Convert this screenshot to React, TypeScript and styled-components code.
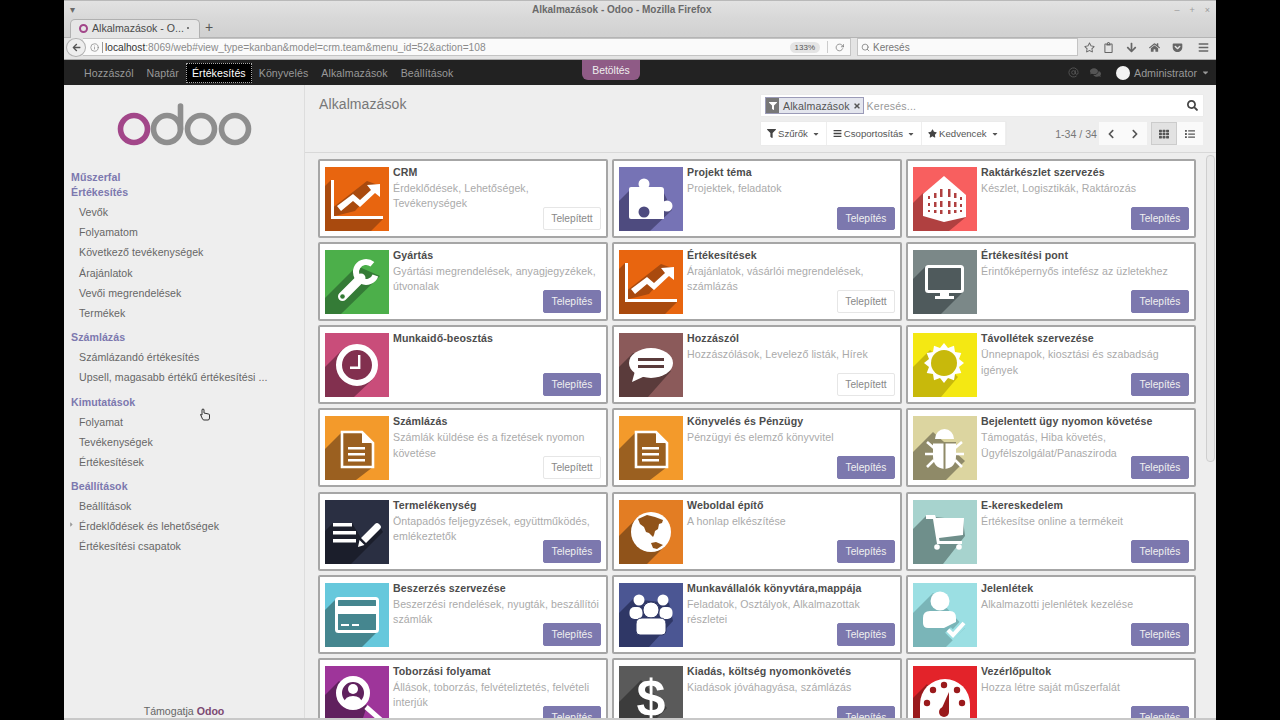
import React from "react";
import styled, { createGlobalStyle } from "styled-components";
import {
  FaFilter, FaBars, FaStar, FaRegStar, FaSearch, FaTimes, FaChevronLeft, FaChevronRight, FaTh, FaList,
  FaComments, FaCaretDown, FaArrowLeft, FaArrowDown, FaHome, FaGetPocket, FaRegClipboard, FaCaretRight,
} from "react-icons/fa";
import { FiInfo, FiSearch, FiRotateCw, FiAtSign } from "react-icons/fi";

const Global = createGlobalStyle`
  html, body { margin: 0; padding: 0; background: #000; overflow: hidden; }
  * { box-sizing: border-box; }
  #root { font-family: "Liberation Sans", Arial, sans-serif; }
`;

const Win = styled.div`
  width: 1152px; height: 720px; margin: 0 auto; background: #eee; display: flex; flex-direction: column;
  overflow: hidden; position: relative; border-bottom: 2px solid #c8c8c8;
`;
const TitleBar = styled.div`
  height: 18px; background: linear-gradient(#e2e2e2, #d8d8d8); border-top: 1px solid #b9b9b9; display: flex;
  align-items: center; justify-content: space-between; padding: 0 6px 0 6px; color: #6a6a6a; font-size: 10px;
`;
const TitleText = styled.div`font-weight: 700; font-size: 10px; margin-right: 6px;`;
const WinBtns = styled.div`display: flex; gap: 10px; font-size: 9px; color: #9a9a9a;`;
const TabBar = styled.div`
  height: 20px; background: linear-gradient(#d8d8d8, #d0d0d0); border-bottom: 1px solid #b4b4b4; display: flex;
  align-items: flex-end; padding-left: 6px; color: #555;
`;
const Tab = styled.div`
  width: 130px; height: 19px; background: #e6e6e6; border: 1px solid #b0b0b0; border-bottom: 0; border-radius: 5px 5px 0 0;
  display: flex; align-items: center; padding: 0 10px 2px 8px; gap: 3px; font-size: 10.6px; color: #4a4a4a; margin-bottom: -1px;
`;
const Favicon = styled.span`
  width: 9px; height: 9px; border: 2px solid #a24689; border-radius: 50%; flex: none;
`;
const TabLabel = styled.span`flex: 1; white-space: nowrap; margin-left: 1px;`;
const NewTab = styled.span`font-size: 14px; margin: 0 0 2px 5px; color: #555;`;
const NavBar = styled.div`
  height: 22px; background: #e4e4e4; display: flex; align-items: center; padding: 0 7px 3px 2px; border-bottom: 1px solid #aaa;
`;
const BackBtn = styled.div`
  width: 20px; height: 19px; border-radius: 50%; border: 1px solid #b0b0b0; background: #eee; display: flex;
  align-items: center; justify-content: center; color: #555; font-size: 9px; flex: none; position: relative; z-index: 1;
`;
const UrlBox = styled.div`
  width: 768px; height: 18px; margin-left: -3px; background: #fafafa; border: 1px solid #c4c4c4; border-left: 0;
  display: flex; align-items: center; padding: 0 6px 0 7px; font-size: 10.2px; color: #8a8a8a; gap: 3px;
`;
const UrlText = styled.span`flex: 1; border-left: 1px solid #999; padding-left: 2px; white-space: nowrap;`;
const UrlHost = styled.b`color: #333; font-weight: 400;`;
const ZoomPill = styled.span`
  background: #e4e4e4; border-radius: 8px; padding: 1px 5px; font-size: 8px; color: #555; margin-right: 4px;
`;
const Reload = styled.span`
  border-left: 1px solid #ccc; padding-left: 7px; display: flex; color: #777; font-size: 9px; height: 12px; align-items: center;
`;
const SearchBox = styled.div`
  width: 221px; height: 18px; margin-left: 6px; background: #fafafa; border: 1px solid #c4c4c4; display: flex; align-items: center;
  padding-left: 3px; gap: 3px; font-size: 10px; color: #777;
`;
const ToolIcons = styled.div`
  display: flex; flex: 1; justify-content: flex-end; align-items: center; gap: 12px; color: #666; font-size: 11px;
  & > :first-child { margin-right: -4px; }
  & > :last-child { margin-left: 3px; }
`;
const TopNav = styled.div`
  height: 25px; background: #222; display: flex; align-items: center; padding: 0 6px 0 14px; position: relative;
`;
const NavItem = styled.div<{ $active?: boolean }>`
  height: 20px; padding: 0 5px; margin-right: 1px; display: flex; align-items: center; font-size: 10.6px; letter-spacing: 0.08px;
  color: ${(p) => (p.$active ? "#fff" : "#999")}; background: ${(p) => (p.$active ? "#000" : "transparent")};
  border: 1px ${(p) => (p.$active ? "dotted #aaa" : "solid transparent")}; white-space: nowrap;
`;
const Loading = styled.div`
  position: absolute; left: 518px; top: 0; width: 58px; height: 20px; background: #8f5b86; color: #eee; font-size: 10.4px;
  display: flex; align-items: center; justify-content: center; border-radius: 0 0 6px 6px;
`;
const NavRight = styled.div`margin-left: auto; display: flex; align-items: center; color: #555; font-size: 11px;`;
const Avatar = styled.span`width: 14px; height: 14px; background: #f2f2f2; border-radius: 50%; margin: 0 4px 0 15px; flex: none;`;
const AdminText = styled.span`font-size: 10.7px; color: #999;`;
const Body = styled.div`flex: 1; display: flex; min-height: 0;`;
const Side = styled.aside`
  width: 241px; flex: none; background: #eee; border-right: 1px solid #ddd; display: flex; flex-direction: column; position: relative;
`;
const Logo = styled.svg`width: 140px; height: 50px; margin: 18px 0 0 50px; flex: none;`;
const Menu = styled.nav`margin-top: 17px; flex: 1; padding-left: 7px;`;
const MenuHead = styled.div`
  font-size: 10.6px; font-weight: 700; color: #7c78ae; height: 15px; line-height: 15px; letter-spacing: 0.06px;
`;
const Group = styled.div`margin-bottom: 7px;`;
const MenuItem = styled.div`
  font-size: 10.6px; color: #666; height: 20.2px; line-height: 20px; padding-left: 8px; white-space: nowrap; position: relative; letter-spacing: 0.06px;
`;
const First = styled.div`height: 2px;`;
const Caret = styled.span`position: absolute; left: -3px; top: 0; font-size: 7px; color: #999;`;
const Footer = styled.div`text-align: center; font-size: 10.6px; color: #666; padding-top: 3px; height: 16px;`;
const FooterBrand = styled.b`color: #7c4a72;`;
const Cursor = styled.svg`position: absolute; left: 135px; top: 323px; width: 12px; height: 13px;`;
const Main = styled.main`flex: 1; min-width: 0; display: flex; flex-direction: column;`;
const Panel = styled.div`
  height: 68px; flex: none; display: flex; justify-content: space-between; padding: 10px 13px 0 14px; border-bottom: 1px solid #d8d8d8;
`;
const PageTitle = styled.h1`margin: 0; font-size: 14px; font-weight: 400; color: #777; line-height: 18px; letter-spacing: 0.1px;`;
const PanelRight = styled.div`width: 442px; display: flex; flex-direction: column; gap: 6px;`;
const Search = styled.div`
  height: 21px; background: #fff; display: flex; align-items: center; padding: 0 5px 0 4px; box-shadow: 0 0 1px #ddd;
`;
const Facet = styled.div`
  height: 17px; display: flex; align-items: center; background: #e4e6ee; border: 1px solid #9b9bb8; font-size: 10.6px; color: #555; letter-spacing: 0.1px;
`;
const FacetIcon = styled.span`
  width: 13px; height: 15px; background: #777; color: #fff; display: flex; align-items: center; justify-content: center; font-size: 8px; margin-right: 4px;
`;
const FacetX = styled.span`font-size: 8px; margin: 0 2px 0 3px; display: flex; color: #555;`;
const SearchPh = styled.span`flex: 1; font-size: 10.6px; color: #999; margin-left: 3px; letter-spacing: 0.2px;`;
const SearchBtn = styled.span`display: flex; font-size: 11px; color: #444;`;
const ToolRow = styled.div`display: flex; align-items: center;`;
const BtnGroup = styled.div`display: flex; height: 23px; background: #fff; box-shadow: 0 0 1px #ddd;`;
const ToolBtn = styled.div`
  display: flex; align-items: center; gap: 2px; padding: 0 6px; font-size: 9.6px; color: #555; border-right: 1px solid #eee; white-space: nowrap;
  & > svg { margin-left: 2px; }
`;
const SmallIcon = styled.span`display: inline-flex; font-size: 9px; color: #444;`;
const Pager = styled.span`margin-left: auto; font-size: 10.6px; color: #777; margin-right: 2px;`;
const IconBtn = styled.div<{ $on?: boolean }>`
  width: 24px; height: 23px; display: flex; align-items: center; justify-content: center; font-size: 10px; color: #555;
  background: ${(p) => (p.$on ? "#e2e2e2" : "#fafafa")}; border: ${(p) => (p.$on ? "1px solid #ccc" : "0")};
`;
const Views = styled.div`display: flex; margin-left: 4px; & > div { width: 26px; }`;
const Content = styled.div`flex: 1; min-height: 0; display: flex; overflow: hidden;`;
const Grid = styled.div`
  flex: 1; padding: 6px 0 0 13px; display: grid; grid-template-columns: repeat(3, 290px); grid-auto-rows: 79px; column-gap: 4px; row-gap: 4.17px;
`;
const Scroll = styled.div`
  width: 9px; margin: 2px 1px 0 0; height: 307px; background: #e9e9e9; border: 1px solid #cfcfcf; border-radius: 4px;
`;
const Card = styled.article`
  background: #fff; border: 2px solid #a6a6a6; border-radius: 2px; padding: 6px 5px 5px 5px; display: flex; gap: 4px;
`;
const IconBox = styled.svg`width: 64px; height: 64px; flex: none; display: block;`;
const Info = styled.div`flex: 1; min-width: 0; display: flex; flex-direction: column;`;
const TextBlock = styled.div`flex: 1; min-height: 0; margin-top: -2px;`;
const CardTitle = styled.h2`
  margin: 0; font-size: 10.6px; font-weight: 700; color: #4c4c4c; line-height: 14px; letter-spacing: 0.1px; white-space: nowrap;
`;
const Desc = styled.p`
  margin: 2px 0 0; font-size: 10.6px; color: #aaa; line-height: 15.3px; letter-spacing: 0.08px;
`;
const Install = styled.div<{ $done?: boolean }>`
  align-self: flex-end; width: 58px; height: 23px; flex: none; border-radius: 2px; display: flex; align-items: center; justify-content: center;
  font-size: 10.2px; margin: -6px 0 1px;
  color: ${(p) => (p.$done ? "#888" : "#f0f0f0")}; background: ${(p) => (p.$done ? "#fff" : "#7c78ae")};
  border: 1px solid ${(p) => (p.$done ? "#e6e6e6" : "#7c78ae")};
`;

type G = { bg: string; sh: string; poly: string; glyph: (sh: string, bg: string) => React.ReactNode };

const star = (cx: number, cy: number, R: number, r: number, n: number) =>
  Array.from({ length: n * 2 }, (_, i) => {
    const a = (Math.PI * i) / n - Math.PI / 2;
    const q = i % 2 ? r : R;
    return `${(cx + q * Math.cos(a)).toFixed(1)},${(cy + q * Math.sin(a)).toFixed(1)}`;
  }).join(" ");

const chart: G["glyph"] = () => (
  <g fill="#fff">
    <path d="M6 13h3v36h49v3H6z" />
    <path d="M12 39l16-12 7 6 11-10-4-5 13-1v13l-5-4-15 14-7-6-12 10z" />
  </g>
);
const chartPoly = "0,19 6,13 6,42 42,14 53,18 30,44 10,49 58,49 58,52 46,64 0,64";
const doc: G["glyph"] = () => (
  <g>
    <path d="M17 16h20l11 11v24H17z" fill="none" stroke="#fff" strokeWidth="2.6" />
    <path d="M37 16v11h11z" fill="#fff" />
    <path d="M23 31h17v2.4H23zM23 37h17v2.4H23zM23 43h17v2.4H23z" fill="#fff" />
  </g>
);
const docPoly = "17,16 0,33 0,64 31,64 48,51 48,27 37,16";

const icons: Record<string, G> = {
  crm: { bg: "#e8650f", sh: "#a94a0e", poly: chartPoly, glyph: chart },
  sales: { bg: "#e8650f", sh: "#a94a0e", poly: chartPoly, glyph: chart },
  project: {
    bg: "#7673b5", sh: "#4e4b7f", poly: "14,20 0,34 0,64 31,64 53,43 44,24",
    glyph: (sh) => (
      <g fill="#fff">
        <path d="M12 20h30q3 0 3 3v29H12q-2 0-2-2V22q0-2 2-2z" />
        <circle cx="25" cy="17" r="5.5" />
        <circle cx="48" cy="39" r="5.5" />
        <circle cx="25" cy="45" r="5.5" fill={sh} />
      </g>
    ),
  },
  inventory: {
    bg: "#f85f5f", sh: "#b04040", poly: "10,26 0,36 0,64 36,64 53,50 53,30",
    glyph: () => (
      <g>
        <path d="M31 9l22 19v22l-22 5-21-6V27z" fill="#fff" />
        <g fill="#b04040">
          <path d="M15 29h2v3h-2zM21 26h2.5v5H21zM27 22h2.5v8H27zM35 22h2.5v8H35zM41 26h2.5v5H41zM47 30h2v3h-2zM15 36h2v3h-2zM21 35h2.5v5H21zM27 34h2.5v6H27zM35 34h2.5v6H35zM41 35h2.5v5H41zM47 37h2v3h-2zM15 43h2v2h-2zM21 43h2.5v3H21zM27 43h2.5v4H27zM35 43h2.5v4H35zM41 43h2.5v3H41zM47 43h2v2h-2z" />
        </g>
      </g>
    ),
  },
  mfg: {
    bg: "#4caf4a", sh: "#347b36", poly: "32,16 0,48 0,64 16,64 55,26",
    glyph: (sh) => (
      <g>
        <path d="M17.5 46.5L36 28" stroke="#fff" strokeWidth="9" strokeLinecap="round" />
        <path d="M47.4 14.3A10 10 0 1 0 50.4 25.4" fill="none" stroke="#fff" strokeWidth="6" />
        <circle cx="17.5" cy="46.5" r="2.3" fill={sh} />
      </g>
    ),
  },
  pos: {
    bg: "#7b8888", sh: "#4f5a5c", poly: "12,17 0,29 0,64 28,64 50,42",
    glyph: (sh) => (
      <g>
        <rect x="13.5" y="16.5" width="36" height="25" rx="2" fill={sh} stroke="#fff" strokeWidth="3" />
        <path d="M27 42h9v4h5v3H22v-3h5z" fill="#fff" />
      </g>
    ),
  },
  clock: {
    bg: "#c94d7a", sh: "#82304f", poly: "17,17 0,34 0,64 29,64 47,47",
    glyph: () => (
      <g>
        <circle cx="32" cy="32" r="18" fill="#82304f" stroke="#fff" strokeWidth="6" />
        <path d="M33 22h2.4v14H25v-2.6h8z" fill="#fff" />
      </g>
    ),
  },
  discuss: {
    bg: "#8b5a5a", sh: "#5a3b3b", poly: "14,20 0,34 0,64 29,64 52,38",
    glyph: (sh) => (
      <g>
        <ellipse cx="32" cy="30" rx="22" ry="15" fill="#fff" />
        <path d="M16 38l-3 11 13-6z" fill="#fff" />
        <path d="M19 25h26v3H19zM19 32h26v3H19z" fill={sh} />
      </g>
    ),
  },
  sun: {
    bg: "#f4e813", sh: "#c8b90b", poly: "17,17 0,34 0,64 28,64 45,44",
    glyph: (sh) => (
      <g>
        <polygon points={star(31, 30, 20, 15.5, 12)} fill="#fff" />
        <circle cx="31" cy="30" r="13" fill={sh} />
      </g>
    ),
  },
  doc: { bg: "#f39a2b", sh: "#9b6020", poly: docPoly, glyph: doc },
  bug: {
    bg: "#dcd5a0", sh: "#8f8a68", poly: "20,16 0,36 0,64 33,64 52,45",
    glyph: (sh) => (
      <g>
        <path d="M22 23a9.5 10 0 0 1 19 0z" fill="#fff" />
        <path d="M20 26h23v14q0 12-11.500 13Q20 52 20 40z" fill="#fff" />
        <path d="M30.500 26h2v27h-2zM20 26h23v1.500H20z" fill={sh} />
        <path d="M21 32l-7-6M20 38h-8M21 44l-7 7M42 32l7-6M43 38h8M42 44l7 7" stroke="#fff" strokeWidth="2.6" fill="none" />
      </g>
    ),
  },
  notes: {
    bg: "#2a2f42", sh: "#1b1e2b", poly: "8,23 0,31 0,64 26,64 58,32 52,22 36,38 27,23",
    glyph: () => (
      <g fill="#fff">
        <path d="M8 23h19v3.400H8zM8 31h23v3.400H8zM8 39h23v3.400H8z" />
        <path d="M36 38l14-14q2-2 4 0l1 1q2 2 0 4L41 43zM34.500 40l5 5-6.500 2z" />
      </g>
    ),
  },
  globe: {
    bg: "#e37d23", sh: "#90531a", poly: "18,18 0,36 0,64 28,64 46,46",
    glyph: (sh) => (
      <g>
        <circle cx="32" cy="32" r="20" fill="#fff" />
        <path d="M19 19l9-4 8 2 8 3-1 3-3 1-1 5-3 2-1 4-1 2-4-4-3-1-2-5-4-3z" fill={sh} />
        <path d="M32 43l5-1 7 3-6 4-4-1z" fill={sh} />
      </g>
    ),
  },
  cart: {
    bg: "#a7d3ce", sh: "#6f8f8b", poly: "13,16 0,29 0,64 30,64 52,36 50,20",
    glyph: () => (
      <g fill="#fff">
        <path d="M13 15h9l1 3h28l-1 17-24 3 .6 3H49v3H24l-4-25h-7z" />
        <circle cx="24" cy="47" r="2.800" />
        <circle cx="46" cy="47" r="2.800" />
      </g>
    ),
  },
  purchase: {
    bg: "#66c8dc", sh: "#45868f", poly: "10,17 0,27 0,64 37,64 54,47",
    glyph: (sh) => (
      <g>
        <rect x="11.500" y="15.500" width="41" height="33" rx="2" fill={sh} stroke="#fff" strokeWidth="3" />
        <path d="M11 23h42v8H11zM16 41h8v2h-8zM27 41h7v2h-7z" fill="#fff" />
      </g>
    ),
  },
  hr: {
    bg: "#4b5693", sh: "#2f3766", poly: "14,16 0,30 0,64 30,64 54,38 50,20",
    glyph: (sh) => (
      <g fill="#fff">
        <circle cx="20" cy="17" r="5.500" />
        <circle cx="44" cy="17" r="5.500" />
        <rect x="10.500" y="24" width="13" height="12" rx="5" />
        <rect x="40.500" y="24" width="13" height="12" rx="5" />
        <circle cx="32" cy="27" r="8" stroke={sh} strokeWidth="1" />
        <path d="M17 41q0-6 6-6h18q6 0 6 6v7q0 4-4 4H21q-4 0-4-4z" stroke={sh} strokeWidth="1" />
      </g>
    ),
  },
  attend: {
    bg: "#9bdfe3", sh: "#7ab5b8", poly: "20,10 0,30 0,64 33,64 52,45",
    glyph: (_, bg) => (
      <g>
        <circle cx="27" cy="18" r="9.500" fill="#fff" />
        <path d="M10 35q0-7 7-7h20q6 0 6 7v4L31 45H15q-5 0-5-5z" fill="#fff" />
        <path d="M35 47l5 5 11-12" fill="none" stroke={bg} strokeWidth="8" />
        <path d="M35 47l5 5 11-12" fill="none" stroke="#fff" strokeWidth="4" />
      </g>
    ),
  },
  recruit: {
    bg: "#9e359a", sh: "#60215e", poly: "14,15 0,29 0,64 34,64 42,40",
    glyph: (sh) => (
      <g>
        <circle cx="28" cy="27" r="14" fill={sh} stroke="#fff" strokeWidth="6" />
        <circle cx="28" cy="23" r="5" fill="#fff" />
        <path d="M19 37q1-7 9-7t9 7q-9 6-18 0z" fill="#fff" />
        <path d="M41 41l16 14" stroke="#fff" strokeWidth="5" />
      </g>
    ),
  },
  expense: {
    bg: "#5a5a5a", sh: "#3c3c3c", poly: "22,14 0,36 0,64 26,64 48,42",
    glyph: () => (
      <text x="32" y="50" textAnchor="middle" fontFamily="Liberation Sans, Arial, sans-serif" fontWeight="700" fontSize="52" fill="#fff">$</text>
    ),
  },
  board: {
    bg: "#e3232a", sh: "#9a1a1c", poly: "14,18 0,32 0,64 40,64",
    glyph: (sh) => (
      <g>
        <path d="M7 64V38a25 25 0 0 1 50 0v26z" fill="#fff" />
        <g fill={sh}>
          <circle cx="20" cy="24" r="3.200" />
          <circle cx="31" cy="19" r="3.200" />
          <circle cx="44" cy="24" r="3.200" />
          <circle cx="14" cy="37" r="3.200" />
          <circle cx="49" cy="37" r="3.200" />
          <circle cx="31" cy="46" r="5" />
          <path d="M28 44l8-18 0 20z" />
        </g>
      </g>
    ),
  },
};

const Icon = ({ k }: { k: string }) => {
  const g = icons[k];
  return (
    <IconBox viewBox="0 0 64 64">
      <rect width="64" height="64" fill={g.bg} />
      <polygon points={g.poly} fill={g.sh} />
      {g.glyph(g.sh, g.bg)}
    </IconBox>
  );
};

const apps: [string, string, string, boolean][] = [
  ["crm", "CRM", "Érdeklődések, Lehetőségek, Tevékenységek", true],
  ["project", "Projekt téma", "Projektek, feladatok", false],
  ["inventory", "Raktárkészlet szervezés", "Készlet, Logisztikák, Raktározás", false],
  ["mfg", "Gyártás", "Gyártási megrendelések, anyagjegyzékek, útvonalak", false],
  ["sales", "Értékesítések", "Árajánlatok, vásárlói megrendelések, számlázás", true],
  ["pos", "Értékesítési pont", "Érintőképernyős intefész az üzletekhez", false],
  ["clock", "Munkaidő-beosztás", "", false],
  ["discuss", "Hozzászól", "Hozzászólások, Levelező listák, Hírek", true],
  ["sun", "Távollétek szervezése", "Ünnepnapok, kiosztási és szabadság igények", false],
  ["doc", "Számlázás", "Számlák küldése és a fizetések nyomon követése", true],
  ["doc", "Könyvelés és Pénzügy", "Pénzügyi és elemző könyvvitel", false],
  ["bug", "Bejelentett ügy nyomon követése", "Támogatás, Hiba követés, Ügyfélszolgálat/Panasziroda", false],
  ["notes", "Termelékenység", "Öntapadós feljegyzések, együttműködés, emlékeztetők", false],
  ["globe", "Weboldal építő", "A honlap elkészítése", false],
  ["cart", "E-kereskedelem", "Értékesítse online a termékeit", false],
  ["purchase", "Beszerzés szervezése", "Beszerzési rendelések, nyugták, beszállítói számlák", false],
  ["hr", "Munkavállalók könyvtára,mappája", "Feladatok, Osztályok, Alkalmazottak részletei", false],
  ["attend", "Jelenlétek", "Alkalmazotti jelenlétek kezelése", false],
  ["recruit", "Toborzási folyamat", "Állások, toborzás, felvételiztetés, felvételi interjúk", false],
  ["expense", "Kiadás, költség nyomonkövetés", "Kiadások jóváhagyása, számlázás", false],
  ["board", "Vezérlőpultok", "Hozza létre saját műszerfalát", false],
];

const menu: [string, string[]][] = [
  ["Értékesítés", ["Vevők", "Folyamatom", "Következő tevékenységek", "Árajánlatok", "Vevői megrendelések", "Termékek"]],
  ["Számlázás", ["Számlázandó értékesítés", "Upsell, magasabb értékű értékesítési ..."]],
  ["Kimutatások", ["Folyamat", "Tevékenységek", "Értékesítések"]],
  ["Beállítások", ["Beállítások", "Érdeklődések és lehetőségek", "Értékesítési csapatok"]],
];

export default function App() {
  return (
    <Win>
      <Global />
      <TitleBar>
        <span>▾</span>
        <TitleText>Alkalmazások - Odoo - Mozilla Firefox</TitleText>
        <WinBtns><span>–</span><span>+</span><span>×</span></WinBtns>
      </TitleBar>
      <TabBar>
        <Tab><Favicon /><TabLabel>Alkalmazások - O...</TabLabel><FaTimes size={6} /></Tab>
        <NewTab>+</NewTab>
      </TabBar>
      <NavBar>
        <BackBtn><FaArrowLeft /></BackBtn>
        <UrlBox>
          <FiInfo size={9} />
          <UrlText><UrlHost>localhost</UrlHost>:8069/web#view_type=kanban&amp;model=crm.team&amp;menu_id=52&amp;action=108</UrlText>
          <ZoomPill>133%</ZoomPill>
          <Reload><FiRotateCw /></Reload>
        </UrlBox>
        <SearchBox><FiSearch size={9} />Keresés</SearchBox>
        <ToolIcons>
          <FaRegStar /><FaRegClipboard /><FaArrowDown /><FaHome /><FaGetPocket /><FaBars />
        </ToolIcons>
      </NavBar>
      <TopNav>
        {["Hozzászól", "Naptár", "Értékesítés", "Könyvelés", "Alkalmazások", "Beállítások"].map((t, i) => (
          <NavItem key={t} $active={i === 2}>{t}</NavItem>
        ))}
        <Loading>Betöltés</Loading>
        <NavRight>
          <FiAtSign style={{ marginRight: 11 }} />
          <FaComments />
          <Avatar />
          <AdminText>Administrator</AdminText>
          <FaCaretDown size={9} style={{ marginLeft: 4, color: "#999" }} />
        </NavRight>
      </TopNav>
      <Body>
        <Side>
          <Logo viewBox="0 0 140 50">
            <g fill="none" strokeWidth="5.600">
              <circle cx="20" cy="26" r="13.500" stroke="#a24689" />
              <circle cx="53" cy="26" r="13.500" stroke="#8e8e8e" />
              <path d="M66.500 26V3" stroke="#8e8e8e" strokeLinecap="round" />
              <circle cx="87" cy="26" r="13.500" stroke="#8e8e8e" />
              <circle cx="121" cy="26" r="13.500" stroke="#8e8e8e" />
            </g>
          </Logo>
          <Menu>
            <MenuHead>Műszerfal</MenuHead>
            {menu.map(([head, items]) => (
              <Group key={head}>
                <MenuHead>{head}</MenuHead>
                <First />
                {items.map((it) => (
                  <MenuItem key={it}>
                    {it === "Érdeklődések és lehetőségek" && <Caret><FaCaretRight /></Caret>}
                    {it}
                  </MenuItem>
                ))}
              </Group>
            ))}
          </Menu>
          <Footer>Támogatja <FooterBrand>Odoo</FooterBrand></Footer>
          <Cursor viewBox="0 0 12 13">
            <path d="M1.500 6.500l2 4.500q.5 1 1.500 1h4q1.500 0 1.500-2V7q0-1-1-1L5 5V1.500Q4 .5 3 1.500V7z" fill="#eee" stroke="#333" strokeWidth="1" />
          </Cursor>
        </Side>
        <Main>
          <Panel>
            <PageTitle>Alkalmazások</PageTitle>
            <PanelRight>
              <Search>
                <Facet>
                  <FacetIcon><FaFilter /></FacetIcon>Alkalmazások<FacetX><FaTimes /></FacetX>
                </Facet>
                <SearchPh>Keresés...</SearchPh>
                <SearchBtn><FaSearch /></SearchBtn>
              </Search>
              <ToolRow>
                <BtnGroup>
                  <ToolBtn><SmallIcon><FaFilter /></SmallIcon>Szűrők<FaCaretDown size={8} /></ToolBtn>
                  <ToolBtn><SmallIcon><FaBars /></SmallIcon>Csoportosítás<FaCaretDown size={8} /></ToolBtn>
                  <ToolBtn><SmallIcon><FaStar /></SmallIcon>Kedvencek<FaCaretDown size={8} /></ToolBtn>
                </BtnGroup>
                <Pager>1-34 / 34</Pager>
                <IconBtn><FaChevronLeft /></IconBtn>
                <IconBtn><FaChevronRight /></IconBtn>
                <Views>
                  <IconBtn $on><FaTh /></IconBtn>
                  <IconBtn><FaList /></IconBtn>
                </Views>
              </ToolRow>
            </PanelRight>
          </Panel>
          <Content>
            <Grid>
              {apps.map(([k, title, desc, done]) => (
                <Card key={title}>
                  <Icon k={k} />
                  <Info>
                    <TextBlock>
                      <CardTitle>{title}</CardTitle>
                      <Desc>{desc}</Desc>
                    </TextBlock>
                    <Install $done={done}>{done ? "Telepített" : "Telepítés"}</Install>
                  </Info>
                </Card>
              ))}
            </Grid>
            <Scroll />
          </Content>
        </Main>
      </Body>
    </Win>
  );
}
